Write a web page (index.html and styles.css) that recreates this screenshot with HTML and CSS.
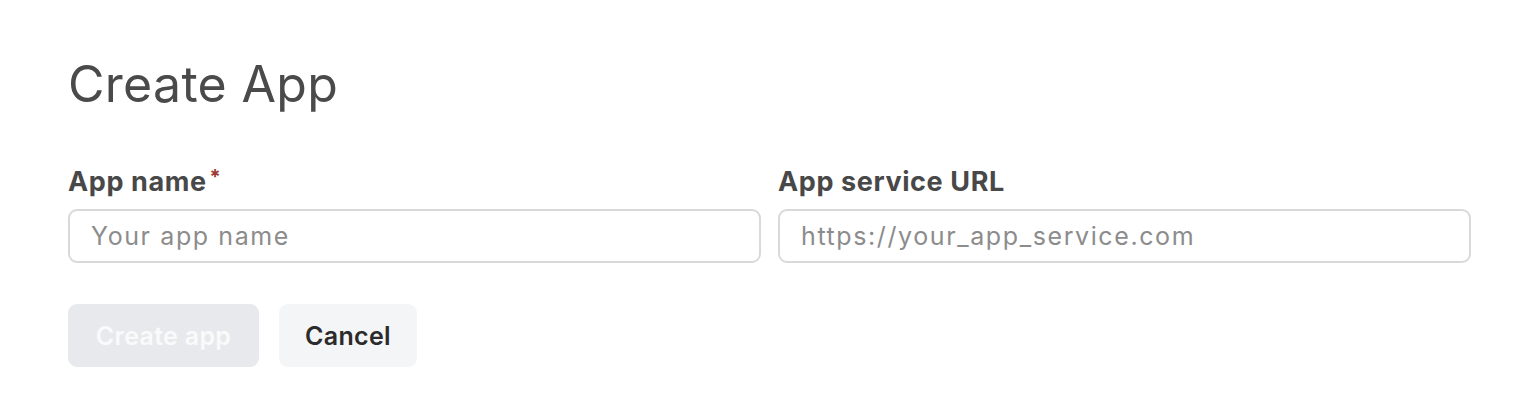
FILE: index.html
```html
<!DOCTYPE html>
<html>
<head>
<meta charset="utf-8">
<link rel="stylesheet" href="styles.css">
</head>
<body>
<main class="page">
  <h1 class="title">Create App</h1>
  <form class="form">
    <div class="fields">
      <label class="field">
        <span class="label">App name<span class="req">*</span></span>
        <input class="input" type="text" placeholder="Your app name">
      </label>
      <label class="field">
        <span class="label">App service URL</span>
        <input class="input" type="text" placeholder="https://your_app_service.com">
      </label>
    </div>
    <div class="actions">
      <button type="button" class="btn btn-primary" disabled>Create app</button>
      <button type="button" class="btn btn-secondary">Cancel</button>
    </div>
  </form>
</main>
</body>
</html>
```
FILE: styles.css
```css
* { box-sizing: border-box; }
html, body { margin: 0; background: #fff; }
body { font-family: Inter, "Noto Sans", sans-serif; color: #4b4b4b; }
.page { padding: 52px 45px 0 68px; }
.title {
  margin: 0;
  font-size: 50px;
  font-weight: 400;
  letter-spacing: 0.3px;
  color: #4a4a4a;
  line-height: 64px;
}
.form { margin-top: 51px; }
.fields { display: grid; grid-template-columns: 1fr 1fr; gap: 17px; }
.field { display: flex; flex-direction: column; }
.label {
  font-size: 27px;
  font-weight: 700;
  color: #484848;
  letter-spacing: 0.6px;
  line-height: 30px;
  margin-bottom: 12px;
}
.req { color: #9c3b32; font-size: 20px; vertical-align: top; margin-left: 3px; line-height: 20px; }
.input {
  height: 54px;
  border: 2px solid #d9d9d9;
  border-radius: 9px;
  padding: 0 21px;
  font-family: inherit;
  font-size: 25px;
  letter-spacing: 1.6px;
  color: #444;
  outline: none;
}
.input::placeholder { color: #8c8c8c; }
.actions { display: flex; gap: 20px; margin-top: 41px; }
.btn {
  height: 63px;
  border: none;
  border-radius: 9px;
  font-family: inherit;
  font-size: 25px;
  font-weight: 600;
  letter-spacing: 0.3px;
  padding: 0;
}
.btn-primary { background: #e8e9ec; color: #fafafb; width: 191px; }
.btn-secondary { background: #f4f5f7; color: #2b2b2b; width: 138px; }
```
